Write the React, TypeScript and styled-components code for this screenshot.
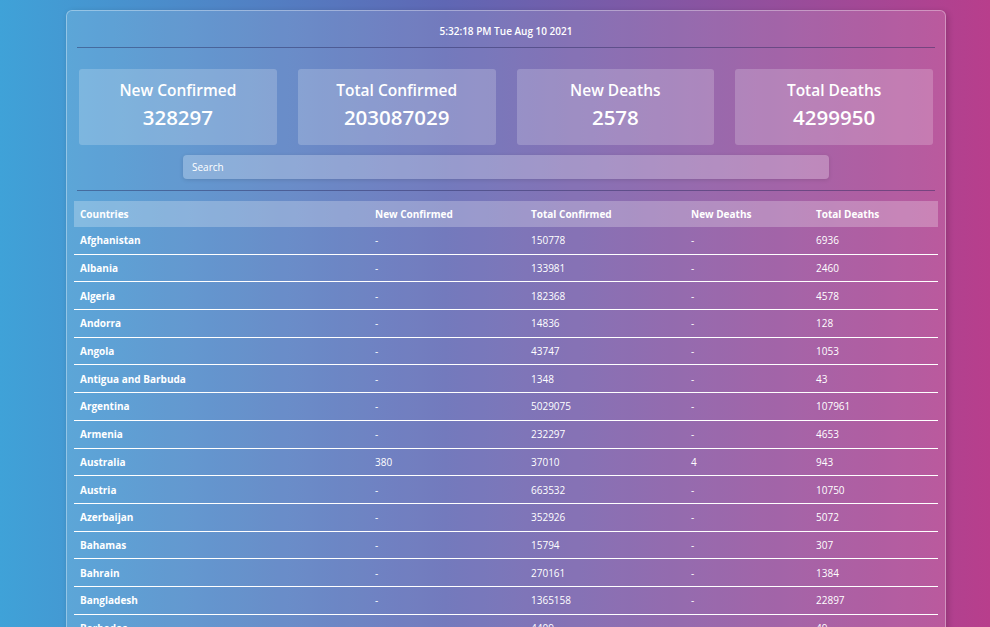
import React from "react";
import styled, { createGlobalStyle } from "styled-components";

const Global = createGlobalStyle`
  html {
    background: linear-gradient(to right, #3fa2d8 0%, #5f67b4 45%, #b83e8c 100%);
    min-height: 100%;
  }
  body {
    margin: 0;
    font-family: "Open Sans", "Noto Sans", Arial, sans-serif;
    color: #fff;
  }
  ::-webkit-scrollbar { display: none; }
`;

const Page = styled.div`
  padding: 10px 0 0 66px;
`;

const Card = styled.div`
  width: 878px;
  border: 1px solid rgba(255, 255, 255, 0.35);
  border-radius: 6px;
  background: rgba(255, 255, 255, 0.13);
  box-shadow: 2px 2px 6px rgba(0, 0, 0, 0.18);
  padding-bottom: 20px;
`;

const TimeBar = styled.div`
  text-align: center;
  font-size: 10px;
  font-weight: 600;
  line-height: 16px;
  padding: 12px 0 8px;
`;

const Divider = styled.div`
  height: 1px;
  margin: 0 10px;
  background: rgba(40, 40, 90, 0.45);
`;

const Stats = styled.div`
  display: grid;
  grid-template-columns: repeat(4, 1fr);
  gap: 21px;
  padding: 21px 12px 0;
`;

const StatBox = styled.div`
  height: 76px;
  box-sizing: border-box;
  padding-top: 11px;
  border-radius: 3px;
  background: rgba(255, 255, 255, 0.2);
  display: flex;
  flex-direction: column;
  align-items: center;
`;

const StatTitle = styled.div`
  font-size: 15.5px;
  font-weight: 600;
  line-height: 20px;
`;

const StatValue = styled.div`
  margin-top: 3px;
  font-size: 20.5px;
  font-weight: 600;
  line-height: 28px;
`;

const SearchRow = styled.div`
  display: flex;
  justify-content: center;
  padding: 10px 0 11px;
`;

const SearchInput = styled.input`
  width: 646px;
  height: 24px;
  box-sizing: border-box;
  border: none;
  outline: none;
  border-radius: 4px;
  background: rgba(255, 255, 255, 0.25);
  box-shadow: 0 1px 4px rgba(0, 0, 0, 0.12);
  padding: 0 9px;
  font-family: inherit;
  font-size: 10px;
  color: #fff;
  &::placeholder {
    color: #fff;
  }
`;

const TableWrap = styled.div`
  padding: 10px 7px 0;
`;

const Table = styled.table`
  width: 864px;
  border-collapse: collapse;
  table-layout: fixed;
  font-size: 10px;
`;

const HeadRow = styled.tr`
  background: rgba(255, 255, 255, 0.25);
`;

const Th = styled.th<{ $w: number }>`
  box-sizing: border-box;
  width: ${(p) => p.$w}px;
  height: 26px;
  padding: 0 6px;
  text-align: left;
  font-weight: 700;
`;

const Td = styled.td<{ $bold?: boolean }>`
  height: 26.7px;
  padding: 0 6px;
  border-bottom: 1px solid #fff;
  font-weight: ${(p) => (p.$bold ? 700 : 400)};
`;

const cols: [string, number][] = [
  ["Countries", 295],
  ["New Confirmed", 156],
  ["Total Confirmed", 160],
  ["New Deaths", 125],
  ["Total Deaths", 128],
];

const rows: [string, string, string, string, string][] = [
  ["Afghanistan", "-", "150778", "-", "6936"],
  ["Albania", "-", "133981", "-", "2460"],
  ["Algeria", "-", "182368", "-", "4578"],
  ["Andorra", "-", "14836", "-", "128"],
  ["Angola", "-", "43747", "-", "1053"],
  ["Antigua and Barbuda", "-", "1348", "-", "43"],
  ["Argentina", "-", "5029075", "-", "107961"],
  ["Armenia", "-", "232297", "-", "4653"],
  ["Australia", "380", "37010", "4", "943"],
  ["Austria", "-", "663532", "-", "10750"],
  ["Azerbaijan", "-", "352926", "-", "5072"],
  ["Bahamas", "-", "15794", "-", "307"],
  ["Bahrain", "-", "270161", "-", "1384"],
  ["Bangladesh", "-", "1365158", "-", "22897"],
  ["Barbados", "-", "4409", "-", "49"],
  ["Belarus", "-", "448036", "-", "3492"],
  ["Belgium", "-", "1128603", "-", "25279"],
];

const stats: [string, string][] = [
  ["New Confirmed", "328297"],
  ["Total Confirmed", "203087029"],
  ["New Deaths", "2578"],
  ["Total Deaths", "4299950"],
];

export default function App() {
  return (
    <>
      <Global />
      <Page>
        <Card>
          <TimeBar>5:32:18 PM Tue Aug 10 2021</TimeBar>
          <Divider />
          <Stats>
            {stats.map(([t, v]) => (
              <StatBox key={t}>
                <StatTitle>{t}</StatTitle>
                <StatValue>{v}</StatValue>
              </StatBox>
            ))}
          </Stats>
          <SearchRow>
            <SearchInput placeholder="Search" />
          </SearchRow>
          <Divider />
          <TableWrap>
            <Table>
              <thead>
                <HeadRow>
                  {cols.map(([c, w]) => (
                    <Th key={c} $w={w}>
                      {c}
                    </Th>
                  ))}
                </HeadRow>
              </thead>
              <tbody>
                {rows.map((r) => (
                  <tr key={r[0]}>
                    {r.map((cell, i) => (
                      <Td key={i} $bold={i === 0}>
                        {cell}
                      </Td>
                    ))}
                  </tr>
                ))}
              </tbody>
            </Table>
          </TableWrap>
        </Card>
      </Page>
    </>
  );
}
